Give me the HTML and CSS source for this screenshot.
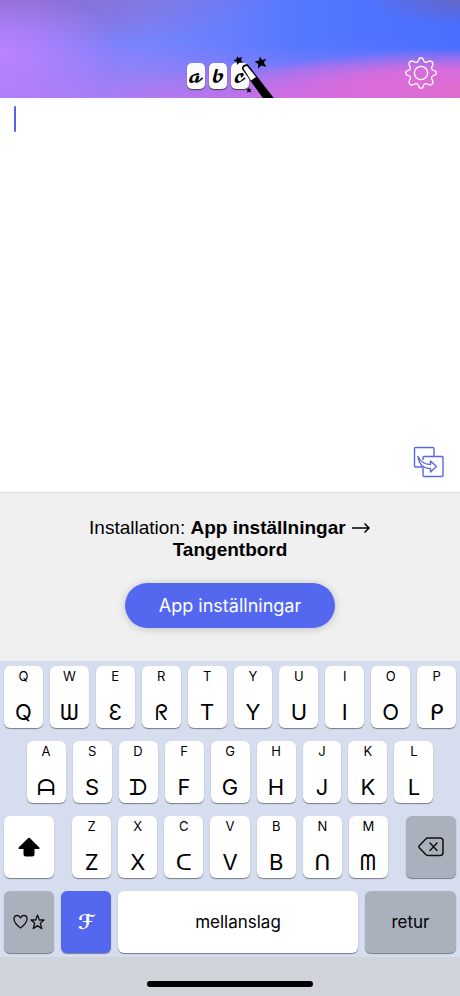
FILE: index.html
```html
<!DOCTYPE html>
<html lang="sv">
<head>
<meta charset="utf-8">
<meta name="viewport" content="width=device-width, initial-scale=1">
<title>Tangentbord</title>
<link rel="stylesheet" href="styles.css">
</head>
<body>
<header class="header">
  <div class="logo">
    <span class="tile">𝓪</span><span class="tile">𝓫</span><span class="tile">𝓬</span>
    <svg class="wand" viewBox="0 0 42 42" aria-hidden="true">
      <path d="M5 13 Q4.500 8.500 10.500 8 L39 45 H28 Z" fill="#000"/>
      <path d="M6.500 12.500 Q7 10 10 10 L19 21 L14 24.500 Z" fill="#fff"/>
      <path d="M23 0.500 L25 4 L29.500 3 L26.700 6.500 L29.500 11 L24.500 9.500 L21 12.500 L21.200 8 L17.500 5.500 L22 4.500 Z" fill="#000"/>
      <path d="M0 0.500 L2 2 L5 1 L4 4 L6 6.500 L2.500 6.500 L0.300 9 L-0.300 5.700 L-3.500 4.500 L-0.500 3 Z" fill="#000"/>
      <path d="M11.500 31.500 L12.500 33 L14.500 33 L13.300 34.500 L14 36.500 L12 35.700 L10.200 36.700 L10.500 34.700 L9 33.500 L11 33.200 Z" fill="#000"/>
    </svg>
  </div>
  <button class="icon-button settings" type="button" aria-label="Inställningar">
    <svg width="32" height="32" viewBox="-16 -16 32 32" fill="none" stroke="#fff" stroke-width="1.300" stroke-linejoin="round">
      <circle r="6.600"/>
      <path d="M-2.500-12.500 L-1.800-14.500Q0-16 1.800-14.500L2.500-12.500Q3.500-10 6-10.800L8.500-12Q12-12 12-8.500L10.800-6Q10-3.500 12.500-2.500L14.500-1.800Q16 0 14.500 1.800L12.500 2.500Q10 3.500 10.800 6L12 8.500Q12 12 8.500 12L6 10.800Q3.500 10 2.500 12.500L1.800 14.500Q0 16-1.800 14.500L-2.500 12.500Q-3.500 10-6 10.800L-8.500 12Q-12 12-12 8.500L-10.800 6Q-10 3.500-12.500 2.500L-14.500 1.800Q-16 0-14.500-1.800L-12.500-2.500Q-10-3.500-10.800-6L-12-8.500Q-12-12-8.500-12L-6-10.800Q-3.500-10-2.500-12.500Z"/>
    </svg>
  </button>
</header>

<main class="editor">
  <textarea class="editor-text" aria-label="Text"></textarea>
  <span class="caret"></span>
  <button class="icon-button copy" type="button" aria-label="Kopiera">
    <svg width="32" height="32" viewBox="0 0 32 32" fill="none" stroke="#5c69dc" stroke-width="1.400" stroke-linejoin="round">
      <path d="M9 21H2.500Q1.500 21 1.500 20V2.500Q1.500 1.500 2.500 1.500H20Q21 1.500 21 2.500V10"/>
      <path d="M10 20V29.500Q10 30.500 11 30.500H29Q30 30.500 30 29.500V11.500Q30 10.500 29 10.500H11Q10 10.500 10 11.500V14"/>
      <path fill="#fff" d="M5 10.500Q6.500 22.500 17.500 22.500V26L23.500 20.500L17.500 15V18.500Q9 18.500 5 10.500Z"/>
    </svg>
  </button>
</main>

<section class="install">
  <p class="install-text">Installation: <b>App inställningar</b>
    <svg class="arrow" viewBox="0 0 20 12" role="img" aria-label="till"><path d="M1 6H18M13.500 1.500L18 6L13.500 10.500" fill="none" stroke="#000" stroke-width="1.500"/></svg>
    <b>Tangentbord</b></p>
  <button class="primary" type="button">App inställningar</button>
</section>

<section class="keyboard" aria-label="Tangentbord">
  <div class="row">
    <button class="key"><small>Q</small><span>Q</span></button>
    <button class="key"><small>W</small><span>Ѡ</span></button>
    <button class="key"><small>E</small><span>Ɛ</span></button>
    <button class="key"><small>R</small><span>ᖇ</span></button>
    <button class="key"><small>T</small><span>T</span></button>
    <button class="key"><small>Y</small><span>Y</span></button>
    <button class="key"><small>U</small><span>U</span></button>
    <button class="key"><small>I</small><span>I</span></button>
    <button class="key"><small>O</small><span>O</span></button>
    <button class="key"><small>P</small><span>ᑭ</span></button>
  </div>
  <div class="row row-inset">
    <button class="key"><small>A</small><span>ᗩ</span></button>
    <button class="key"><small>S</small><span>S</span></button>
    <button class="key"><small>D</small><span>ᗪ</span></button>
    <button class="key"><small>F</small><span>F</span></button>
    <button class="key"><small>G</small><span>G</span></button>
    <button class="key"><small>H</small><span>H</span></button>
    <button class="key"><small>J</small><span>J</span></button>
    <button class="key"><small>K</small><span>K</span></button>
    <button class="key"><small>L</small><span>L</span></button>
  </div>
  <div class="row row-wide">
    <button class="key side" aria-label="Skift">
      <svg width="22" height="20" viewBox="0 0 22 20"><path d="M10 1.300Q11 0.300 12 1.300L21.200 10.200Q22.400 12 20.500 12H16.500V17Q16.500 19.500 14 19.500H8Q5.500 19.500 5.500 17V12H1.500Q-0.400 12 0.800 10.200Z"/></svg>
    </button>
    <div class="letters">
      <button class="key"><small>Z</small><span>Z</span></button>
      <button class="key"><small>X</small><span>X</span></button>
      <button class="key"><small>C</small><span>ᑕ</span></button>
      <button class="key"><small>V</small><span>V</span></button>
      <button class="key"><small>B</small><span>B</span></button>
      <button class="key"><small>N</small><span>ᑎ</span></button>
      <button class="key"><small>M</small><span>ᗰ</span></button>
    </div>
    <button class="key side gray" aria-label="Radera">
      <svg width="26" height="20" viewBox="0 0 26 20" fill="none" stroke="#111" stroke-width="1.500" stroke-linecap="round" stroke-linejoin="round"><path d="M1.300 8.800L7.500 2.200Q8.500 1 10 1H22Q25 1 25 4V15.500Q25 18.500 22 18.500H10Q8.500 18.500 7.500 17.300L1.300 10.700Q0.500 9.700 1.300 8.800ZM12 6L19 13.500M19 6L12 13.500"/></svg>
    </button>
  </div>
  <div class="row">
    <button class="key side gray" aria-label="Symboler">
      <svg width="34" height="16" viewBox="0 0 32 16" fill="none" stroke="#111" stroke-width="1.300" stroke-linejoin="round"><path d="M7.500 14Q1 9 1 5Q1 1.500 4.200 1.500Q6.500 1.500 7.500 4Q8.500 1.500 10.800 1.500Q14 1.500 14 5Q14 9 7.500 14ZM24.500 1L26.300 6H31L27.300 9.300L28.800 14.600L24.500 11.600L20.200 14.600L21.700 9.300L18 6H22.700Z"/></svg>
    </button>
    <button class="key side blue">ℱ</button>
    <button class="key space">mellanslag</button>
    <button class="key return gray">retur</button>
  </div>
</section>
<footer class="home"><span class="home-bar"></span></footer>
</body>
</html>
```
FILE: styles.css
```css
* { box-sizing: border-box; }

body {
  margin: 0;
  min-height: 100vh;
  display: flex;
  flex-direction: column;
  background: #f0f0f1;
  color: #000;
  font-family: "Liberation Sans", Arial, sans-serif;
}

button {
  border: 0;
  padding: 0;
  color: inherit;
  font-family: inherit;
}

svg { display: block; }

.header {
  height: 98px;
  display: grid;
  grid-template-columns: 1fr auto 1fr;
  align-items: end;
  background:
    radial-gradient(ellipse 50% 42% at 100% 92%, #e06ccf 0%, #d66cdc 50%, #d66cdc00 100%),
    radial-gradient(ellipse 50% 38% at 72% 100%, #cf6ce2 0%, #cf6ce200 100%),
    radial-gradient(ellipse 26% 70% at 0% 55%, #bc82ff 0%, #bc82ff00 100%),
    radial-gradient(ellipse 60% 50% at 0% 0%, #8a6ccc 0%, #8a6ccc00 100%),
    radial-gradient(ellipse 20% 26% at 100% 0%, #6668c8 0%, #6668c800 100%),
    linear-gradient(to bottom, #4c6af000 0%, #7a80fa00 45%, #b47cf4 115%),
    linear-gradient(to right, #8a7cf8 0%, #7884fc 32%, #5478ff 65%, #4a6eff 100%);
}

.logo {
  grid-column: 2;
  position: relative;
  display: flex;
  gap: 4px;
  padding: 0 24px 9px 0;
}

.tile {
  width: 18px;
  height: 26px;
  border-radius: 5px;
  background: #fdfdfd;
  box-shadow: 0 1px 1px #444;
  font: 17px/30px "DejaVu Math TeX Gyre", "DejaVu Serif", serif;
  display: flex;
  justify-content: center;
}

.wand {
  position: absolute;
  right: -6px;
  bottom: 0;
  width: 42px;
  height: 42px;
  overflow: visible;
  clip-path: inset(0 0 0 -6px);
}

.icon-button { background: none; }

.settings {
  justify-self: end;
  margin: 0 23px 9px 0;
}

.editor {
  flex: 1;
  position: relative;
  display: flex;
  background: #fff;
  border-bottom: 1px solid #ddd;
}

.editor-text {
  flex: 1;
  border: 0;
  outline: 0;
  resize: none;
  padding: 8px 14px;
  background: none;
  font: 20px/26px "Liberation Sans", Arial, sans-serif;
}

.caret {
  position: absolute;
  top: 8px;
  left: 14px;
  width: 2px;
  height: 26px;
  border-radius: 1px;
  background: #5366e8;
}

.copy {
  position: absolute;
  right: 15px;
  bottom: 14px;
}

.install {
  height: 168px;
  padding: 24px 80px 0;
  display: flex;
  flex-direction: column;
  align-items: center;
  gap: 22px;
}

.install-text {
  margin: 0;
  text-align: center;
  font-size: 19px;
  line-height: 22px;
}

.arrow {
  display: inline-block;
  width: 20px;
  height: 12px;
}

.primary {
  height: 45px;
  padding: 0 34px;
  border-radius: 23px;
  background: #5367ef;
  box-shadow: 0 1px 8px #0003;
  color: #fff;
  font: 18px/45px Inter, sans-serif;
}

.keyboard {
  display: flex;
  flex-direction: column;
  gap: 13px;
  padding: 5px 4px 4px;
  background: #d5ddee;
}

.row {
  display: flex;
  gap: 7px;
}

.row-inset { padding: 0 5%; }
.row-wide { gap: 18px; }

.letters {
  flex: 1;
  display: flex;
  gap: 7px;
}

.key {
  flex: 1 1 0;
  min-width: 0;
  height: 62px;
  border-radius: 6px;
  background: #fff;
  box-shadow: 0 1px 1px #777c88;
  display: flex;
  flex-direction: column;
  align-items: center;
  justify-content: center;
  font: 17px/24px Inter, sans-serif;
}

.key small {
  font-size: 13px;
  line-height: 20px;
}

.key span {
  height: 42px;
  font: 22px/52px Inter, "DejaVu Sans", sans-serif;
}

.key.side { flex: 0 0 50px; }
.key.return { flex: 0 0 91px; }
.key.gray { background: #abb1bc; }

.key.blue {
  background: #5367ef;
  color: #fff;
  font: bold 20px/24px "DejaVu Sans", sans-serif;
}

.home {
  height: 39px;
  display: flex;
  justify-content: center;
  align-items: flex-end;
  padding-bottom: 9px;
  background: #d0d3da;
}

.home-bar {
  width: 36%;
  height: 6px;
  border-radius: 3px;
  background: #000;
}
```
